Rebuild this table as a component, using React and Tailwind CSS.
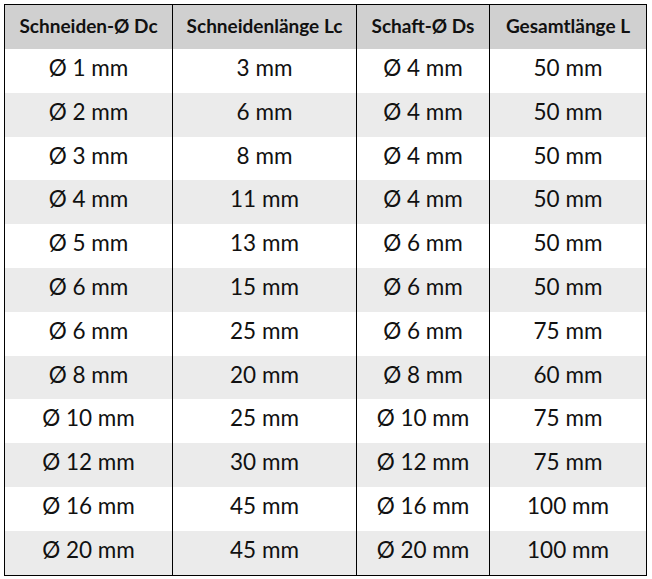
const header = ['Schneiden-Ø Dc', 'Schneidenlänge Lc', 'Schaft-Ø Ds', 'Gesamtlänge L']

const rows = [
  ['Ø 1 mm', '3 mm', 'Ø 4 mm', '50 mm'],
  ['Ø 2 mm', '6 mm', 'Ø 4 mm', '50 mm'],
  ['Ø 3 mm', '8 mm', 'Ø 4 mm', '50 mm'],
  ['Ø 4 mm', '11 mm', 'Ø 4 mm', '50 mm'],
  ['Ø 5 mm', '13 mm', 'Ø 6 mm', '50 mm'],
  ['Ø 6 mm', '15 mm', 'Ø 6 mm', '50 mm'],
  ['Ø 6 mm', '25 mm', 'Ø 6 mm', '75 mm'],
  ['Ø 8 mm', '20 mm', 'Ø 8 mm', '60 mm'],
  ['Ø 10 mm', '25 mm', 'Ø 10 mm', '75 mm'],
  ['Ø 12 mm', '30 mm', 'Ø 12 mm', '75 mm'],
  ['Ø 16 mm', '45 mm', 'Ø 16 mm', '100 mm'],
  ['Ø 20 mm', '45 mm', 'Ø 20 mm', '100 mm'],
]

const cols = 'grid grid-cols-[168px_184px_133px_1fr]'

export default function App() {
  return (
    <div className="w-[652px] h-[579px] bg-white pt-[4px] pl-[4px] font-['Lato',sans-serif] text-[#111]">
      <div className="w-[643px] border border-black">
        <div className={`${cols} h-[44px] bg-[#d0d0d0]`}>
          {header.map((h, i) => (
            <div
              key={h}
              className={`flex justify-center pt-[7px] text-[19px] font-bold ${i < 3 ? 'border-r border-black' : ''}`}
            >
              {h}
            </div>
          ))}
        </div>
        {rows.map((r, ri) => (
          <div key={ri} className={`${cols} h-[43.8px] ${ri % 2 ? 'bg-[#ebebeb]' : 'bg-white'}`}>
            {r.map((c, i) => (
              <div
                key={i}
                className={`flex items-center justify-center pb-[6px] text-[22.5px] ${i < 3 ? 'border-r border-black' : ''}`}
              >
                {c}
              </div>
            ))}
          </div>
        ))}
      </div>
    </div>
  )
}
